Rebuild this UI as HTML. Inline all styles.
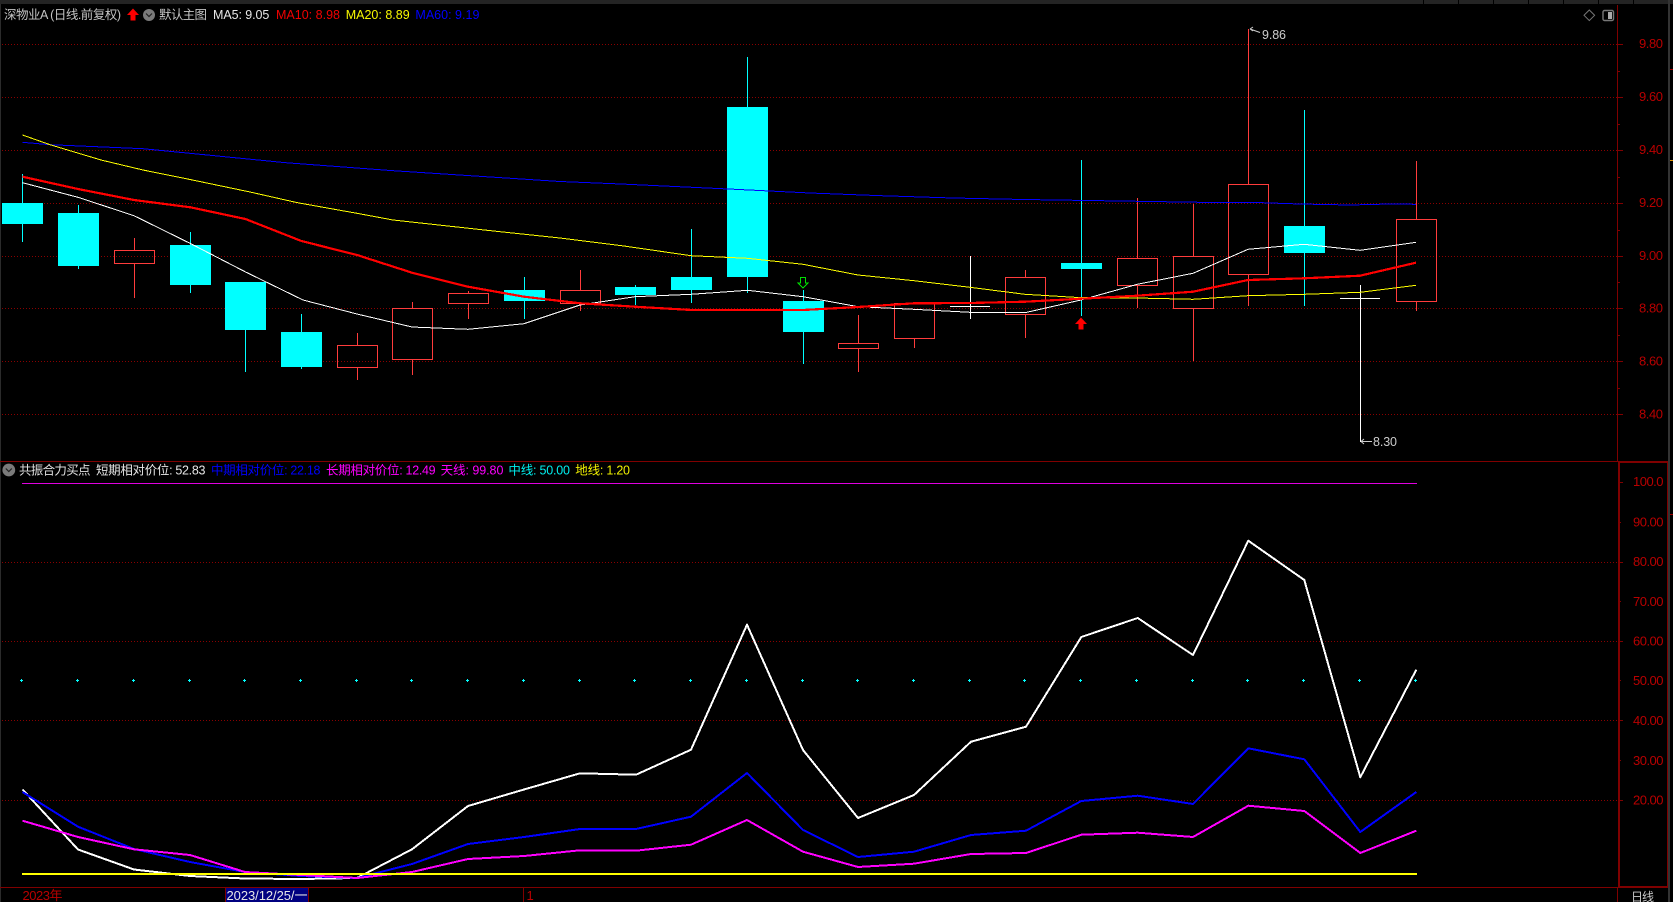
<!DOCTYPE html>
<html lang="zh">
<head>
<meta charset="utf-8">
<title>深物业A</title>
<style>
html,body{margin:0;padding:0;background:#000;width:1673px;height:902px;overflow:hidden}
svg{display:block;position:absolute;left:0;top:0}
text{font-family:"Liberation Sans","Noto Sans CJK SC",sans-serif;font-size:12.5px}
.ax{fill:#b80000;font-size:13px}
</style>
</head>
<body>
<svg width="1673" height="902" viewBox="0 0 1673 902" xmlns="http://www.w3.org/2000/svg">
<rect width="1673" height="902" fill="#000"/>
<!-- top strip / borders -->
<rect x="0" y="0" width="1673" height="4" fill="#242424"/>
<path d="M1423.5 0V4M1458.5 0V4M1493.5 0V4M1528.5 0V4M1563.5 0V4M1598.5 0V4M1633.5 0V4" stroke="#000" stroke-width="1"/>
<rect x="0" y="4" width="1" height="898" fill="#2b2b2b"/>
<rect x="1668" y="0" width="2" height="902" fill="#333"/>
<path d="M1670 69.5H1673M1670 514.5H1673" stroke="#a00000"/>
<path d="M1670 160.5H1673" stroke="#e09000"/>

<!-- grid -->
<g stroke="#8a0000" stroke-width="1" stroke-dasharray="1 2" fill="none">
<path d="M2 44.5H1617M2 97.5H1617M2 150.5H1617M2 203.5H1617M2 256.5H1617M2 308.5H1617M2 361.5H1617M2 414.5H1617"/>
<path d="M2 562.5H1618M2 641.5H1618M2 720.5H1618M2 800.5H1618"/>
</g>

<!-- axes -->
<g stroke="#800000" fill="none" shape-rendering="crispEdges">
<path d="M1617.5 5V461"/>
<path d="M1617 44.5H1623M1617 97.5H1623M1617 150.5H1623M1617 203.5H1623M1617 256.5H1623M1617 308.5H1623M1617 361.5H1623M1617 414.5H1623"/>
<path d="M1617 71.5H1620M1617 124.5H1620M1617 177.5H1620M1617 230.5H1620M1617 282.5H1620M1617 335.5H1620M1617 388.5H1620"/>
<path d="M0 461.5H1667"/>
<path d="M0 887.5H1667"/>
<path d="M1617.5 887V902"/>
<path d="M1619 482.5H1623M1619 562.5H1623M1619 641.5H1623M1619 720.5H1623M1619 800.5H1623"/>
<path d="M1619 522.5H1621M1619 601.5H1621M1619 680.5H1621M1619 760.5H1621"/>
<path d="M523.5 888V902"/>
</g>
<rect x="1618" y="461" width="50" height="2" fill="#800000"/>
<rect x="1618" y="461" width="2" height="426" fill="#800000"/>
<rect x="1667" y="461" width="1" height="426" fill="#800000"/>
<rect x="1618" y="886" width="50" height="2" fill="#800000"/>

<!-- right axis labels -->
<g class="ax">
<text class="ax" x="1639" y="48" textLength="24">9.80</text>
<text class="ax" x="1639" y="101" textLength="24">9.60</text>
<text class="ax" x="1639" y="154" textLength="24">9.40</text>
<text class="ax" x="1639" y="207" textLength="24">9.20</text>
<text class="ax" x="1639" y="260" textLength="24">9.00</text>
<text class="ax" x="1639" y="312.5" textLength="24">8.80</text>
<text class="ax" x="1639" y="365.5" textLength="24">8.60</text>
<text class="ax" x="1639" y="418.5" textLength="24">8.40</text>
<text class="ax" x="1633" y="486" textLength="30.5">100.0</text>
<text class="ax" x="1633" y="526.5" textLength="30.5">90.00</text>
<text class="ax" x="1633" y="566" textLength="30.5">80.00</text>
<text class="ax" x="1633" y="606" textLength="30.5">70.00</text>
<text class="ax" x="1633" y="645.5" textLength="30.5">60.00</text>
<text class="ax" x="1633" y="685" textLength="30.5">50.00</text>
<text class="ax" x="1633" y="725" textLength="30.5">40.00</text>
<text class="ax" x="1633" y="765" textLength="30.5">30.00</text>
<text class="ax" x="1633" y="804.5" textLength="30.5">20.00</text>
</g>

<!-- candles: cyan -->
<g fill="#00ffff" shape-rendering="crispEdges">
<rect x="2" y="203" width="41" height="21"/>
<rect x="58" y="213" width="41" height="53"/>
<rect x="170" y="245" width="41" height="40"/>
<rect x="225" y="282" width="41" height="48"/>
<rect x="281" y="332" width="41" height="35"/>
<rect x="504" y="290" width="41" height="11"/>
<rect x="615" y="287" width="41" height="8"/>
<rect x="671" y="277" width="41" height="13"/>
<rect x="727" y="107" width="41" height="170"/>
<rect x="783" y="301" width="41" height="31"/>
<rect x="1061" y="263" width="41" height="6"/>
<rect x="1284" y="226" width="41" height="27"/>
</g>
<path shape-rendering="crispEdges" stroke="#00ffff" fill="none" d="M22.5 174V242M78.5 205V269M190.5 232V293M245.5 282V372M301.5 314V369M524.5 277V319M635.5 285V305M691.5 229V303M747.5 57V293M803.5 290V364M1081.5 160V316M1304.5 110V306"/>
<!-- candles: red -->
<g fill="none" stroke="#ff3c3c" shape-rendering="crispEdges">
<rect x="114.5" y="250.5" width="40" height="13"/>
<rect x="337.5" y="345.5" width="40" height="22"/>
<rect x="392.5" y="308.5" width="40" height="51"/>
<rect x="448.5" y="293.5" width="40" height="10"/>
<rect x="560.5" y="290.5" width="40" height="13"/>
<rect x="838.5" y="343.5" width="40" height="5"/>
<rect x="894.5" y="303.5" width="40" height="35"/>
<rect x="1005.5" y="277.5" width="40" height="37"/>
<rect x="1117.5" y="258.5" width="40" height="27"/>
<rect x="1173.5" y="256.5" width="40" height="52"/>
<rect x="1228.5" y="184.5" width="40" height="90"/>
<rect x="1396.5" y="219.5" width="40" height="82"/>
<path d="M134.5 238V250M134.5 264V298M357.5 333V345M357.5 368V380M412.5 302V308M412.5 360V375M468.5 291V293M468.5 304V319M580.5 270V290M580.5 304V311M858.5 315V343M858.5 349V372M914.5 339V348M1025.5 270V277M1025.5 315V338M1137.5 198V258M1137.5 286V308M1193.5 204V256M1193.5 309V361M1248.5 29V184M1248.5 275V306M1416.5 161V219M1416.5 302V311"/>
</g>
<!-- doji -->
<path shape-rendering="crispEdges" stroke="#fff" fill="none" d="M950 306.5H990M970.5 256V319M1340 298.5H1380M1360.5 285V442"/>

<!-- MA lines -->
<g fill="none" shape-rendering="crispEdges" stroke-linejoin="round">
<polyline stroke="#0000ff" stroke-width="1" points="22.5,142.3 50,144.7 143,148.7 285.7,162.7 393,170.7 560,181.5 621,184 735,189.3 810,193 881,195.7 953,198 1024,199.5 1120,201 1200,202.3 1262,202.7 1300,204 1350,205 1390,204 1416,204.3"/>
<polyline stroke="#ffff00" stroke-width="1" points="22.5,135 50,144.7 101,160 143,170 190,179.5 250,192 297.5,202.7 357,213.3 393,220 500,231.7 560,238 624,246 691,255.7 747.5,258.3 803,264.3 858,275 914,280.7 970,287.3 1025,294.3 1081.4,297.7 1137,298 1193,299.3 1248,295.7 1304,294.3 1360,292.3 1416,285.3"/>
<polyline stroke="#ffffff" stroke-width="1" points="22.5,182.7 78,197.3 134,215.7 190,243.3 245,271.7 303,300 357,314 412,327 468,329.3 524,323.7 580,305 635,296.7 691,294.3 747.5,290.3 803,296.7 858,306.7 914,309.3 970,312.3 1025,312.7 1081,300 1137.3,284.3 1193,273.3 1248,249.3 1304,244.3 1360,250.3 1416,242.3"/>
<polyline stroke="#ff0000" stroke-width="2.2" points="22.5,176.7 78,189 134,200 190.4,207.3 245.4,219 301.4,241 357,255 412,272.7 468,286.7 524,296.7 580.4,303.3 635,306.7 691.4,310 747.5,310 803,310 858,307 914,303.3 970,303 1025,301.7 1081,298.7 1137.3,295.7 1193,291.7 1248,280 1304,278.3 1360,275.7 1416,262.7"/>
</g>

<!-- arrows -->
<path d="M800.5 277.5H805.5V283H808L803 288L798 283H800.5Z" fill="none" stroke="#00dd00" stroke-width="1" shape-rendering="crispEdges"/>
<path d="M1081 317.5L1087 324H1083.5V329.5H1078.5V324H1075Z" fill="#ff0000"/>
<path d="M133 8.5L139 15H135.5V20.5H130.5V15H127Z" fill="#ff0000"/>

<!-- hi/lo marks -->
<path d="M1250 29L1260 32.5M1250 29L1253 27M1250 29L1253 31" stroke="#ccc" fill="none" stroke-width="1"/>
<text x="1262" y="39" fill="#ccc" textLength="24">9.86</text>
<path d="M1361 441.5H1372M1361 441.5L1364 439M1361 441.5L1364 444" stroke="#ccc" fill="none" stroke-width="1"/>
<text x="1373" y="446" fill="#ccc" textLength="24">8.30</text>

<!-- header main -->
<text x="4" y="19" fill="#c4c4c4" textLength="117">深物业A (日线.前复权)</text>
<circle cx="149" cy="15" r="6" fill="#7a7a7a"/>
<path d="M146 13.5L149 16.5L152 13.5" fill="none" stroke="#222" stroke-width="1.2"/>
<text x="159" y="19" fill="#c4c4c4" textLength="48">默认主图</text>
<text x="213" y="19" fill="#e6e6e6" textLength="56.3">MA5: 9.05</text>
<text x="276" y="19" fill="#f00000" textLength="64">MA10: 8.98</text>
<text x="345.7" y="19" fill="#f8f800" textLength="64">MA20: 8.89</text>
<text x="415.4" y="19" fill="#0000ff" textLength="64">MA60: 9.19</text>

<!-- top-right icons -->
<path d="M1589.3 10L1594.6 15.3L1589.3 20.6L1584 15.3Z" fill="none" stroke="#777" stroke-width="1"/>
<rect x="1603" y="10.5" width="10.5" height="10" rx="1.5" fill="none" stroke="#777" stroke-width="1.4"/>
<rect x="1608" y="12" width="4" height="7" fill="#aaa"/>

<!-- sub panel header -->
<circle cx="8.8" cy="470" r="6.4" fill="#7a7a7a"/>
<path d="M5.8 468.5L8.8 471.5L11.8 468.5" fill="none" stroke="#222" stroke-width="1.2"/>
<text x="19" y="474.5" fill="#e0e0e0" textLength="71.5">共振合力买点</text>
<text x="96" y="474.5" fill="#e6e6e6" textLength="109.4">短期相对价位: 52.83</text>
<text x="211" y="474.5" fill="#0000ff" textLength="109.4">中期相对价位: 22.18</text>
<text x="326" y="474.5" fill="#ff00ff" textLength="109.6">长期相对价位: 12.49</text>
<text x="440.6" y="474.5" fill="#ff00ff" textLength="62.8">天线: 99.80</text>
<text x="508.4" y="474.5" fill="#00f0f0" textLength="61.6">中线: 50.00</text>
<text x="575.3" y="474.5" fill="#f0f000" textLength="54.7">地线: 1.20</text>

<!-- sub panel lines -->
<g fill="none" shape-rendering="crispEdges" stroke-width="2" stroke-linejoin="round">
<path d="M22 483.5H1417" stroke="#e000e0" stroke-width="1"/>
<polyline stroke="#ffffff" points="22.5,789.5 78,849.5 134,869.5 190,876 245,878.5 301,879 357,878 412,849.3 468,806 524,789.5 580,773.3 636,774.7 691,749.7 747,624.7 803,750 858,818 914,795 971,741.7 1026,726.7 1081.3,637 1137.7,618 1193,655 1248.3,540.7 1304.3,580 1360.3,777.3 1416.3,669.7"/>
<polyline stroke="#0000ff" points="22.5,792 78,826.7 134,849 190,862 245,872 301,876 357,878 412,864 468,844 524,837 580,829 636,829 691,816.7 747,773 803,830 858,857 914,851.7 971,835 1026,830.7 1081.3,801 1137.7,795.7 1193,804 1248.3,748.3 1304.3,759.3 1360.3,832 1416.3,792"/>
<polyline stroke="#ff00ff" points="22.5,820.7 78,837 134,849.3 190,855 245,872 301,875 357,878 412,872 468,859 524,856 580,850.3 636,850.7 691,844.7 747,820 803,851.7 858,867 914,863.7 971,854 1026,853 1081.3,834.7 1137.7,832.7 1193,837 1248.3,805.7 1304.3,811 1360.3,853 1416.3,830.7"/>
<path d="M22 874H1417" stroke="#ffff00" stroke-width="2"/>
</g>

<!-- cyan dots -->
<path shape-rendering="crispEdges" stroke="#00ffff" fill="none" stroke-width="1" d="M20 680.5h3M21.5 679v3M76 680.5h3M77.5 679v3M132 680.5h3M133.5 679v3M188 680.5h3M189.5 679v3M243 680.5h3M244.5 679v3M299 680.5h3M300.5 679v3M355 680.5h3M356.5 679v3M410 680.5h3M411.5 679v3M466 680.5h3M467.5 679v3M522 680.5h3M523.5 679v3M578 680.5h3M579.5 679v3M633 680.5h3M634.5 679v3M689 680.5h3M690.5 679v3M745 680.5h3M746.5 679v3M801 680.5h3M802.5 679v3M856 680.5h3M857.5 679v3M912 680.5h3M913.5 679v3M968 680.5h3M969.5 679v3M1023 680.5h3M1024.5 679v3M1079 680.5h3M1080.5 679v3M1135 680.5h3M1136.5 679v3M1191 680.5h3M1192.5 679v3M1246 680.5h3M1247.5 679v3M1302 680.5h3M1303.5 679v3M1358 680.5h3M1359.5 679v3M1414 680.5h3M1415.5 679v3"/>

<!-- bottom axis -->
<text x="22.5" y="900" fill="#b80000" style="font-size:13px" textLength="40">2023年</text>
<rect x="225" y="888" width="83" height="14" fill="#000080"/>
<path d="M225.5 888V902M308.5 888V902" stroke="#800000" fill="none" shape-rendering="crispEdges"/>
<text x="226.5" y="900" fill="#e6e6e6" style="font-size:13px" textLength="81">2023/12/25/一</text>
<text x="526.5" y="900" fill="#b80000" style="font-size:13px">1</text>
<text x="1631" y="901" fill="#c8c8c8" style="font-size:12px" textLength="23">日线</text>
</svg>
</body>
</html>
